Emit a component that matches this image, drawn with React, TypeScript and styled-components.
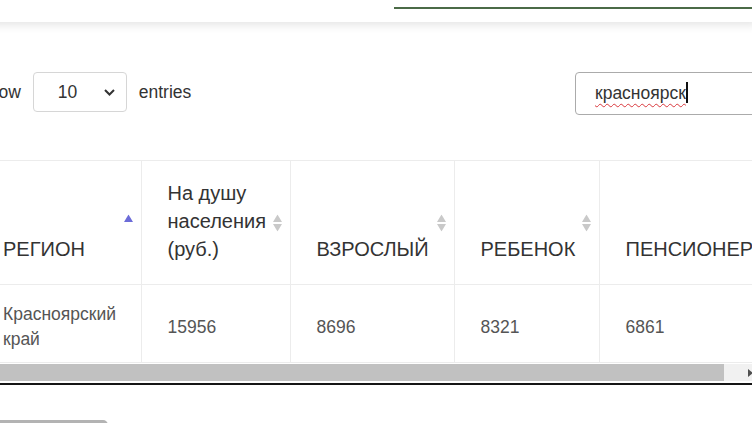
import React from "react";
import styled, { createGlobalStyle } from "styled-components";

const GlobalStyle = createGlobalStyle`
  html, body {
    margin: 0;
    padding: 0;
    background: #fff;
    overflow: hidden;
  }
  body {
    font-family: "Liberation Sans", Arial, sans-serif;
    color: #333;
  }
`;

const Viewport = styled.div`
  width: 752px;
  height: 423px;
  overflow: hidden;
`;

// the page is scrolled sideways, so its left edge sits just off-screen
const Page = styled.div`
  width: 782px;
  margin-left: -23px;
`;

const TopBar = styled.div`
  height: 22px;
  display: flex;
  box-sizing: border-box;
  padding: 7px 0 0 417px;
  background: #fff;
  box-shadow: 0 5px 10px -2px rgba(0, 0, 0, 0.11);
  position: relative;
  z-index: 1;
`;

const NavLine = styled.div`
  flex: 1;
  height: 2px;
  background: #4b6b47;
`;

const Controls = styled.div`
  margin-top: 50px;
  height: 43px;
  display: flex;
  align-items: center;
  font-size: 17.5px;
`;

const LengthControl = styled.div`
  display: flex;
  align-items: center;
  gap: 12px;
  margin-top: -3px;
`;

const SelectBox = styled.div`
  width: 94px;
  height: 40px;
  box-sizing: border-box;
  border: 1px solid #d6d6d6;
  border-radius: 4px;
  padding: 0 11px 0 24px;
  display: flex;
  align-items: center;
  justify-content: space-between;
  color: #333;
`;

const SearchBox = styled.div`
  margin-left: auto;
  width: 184px;
  height: 43px;
  box-sizing: border-box;
  border: 1px solid #ababab;
  border-radius: 4px;
  padding-left: 19px;
  display: flex;
  align-items: center;
  color: #333;
`;

const Misspelled = styled.span`
  text-decoration: underline wavy #d9383d;
  text-decoration-thickness: 1px;
  text-underline-offset: 4px;
`;

const Caret = styled.span`
  display: inline-block;
  width: 2px;
  height: 21px;
  background: #111;
  margin-top: -2px;
`;

const ScrollHead = styled.div`
  margin-top: 45px;
  width: 782px;
  overflow: hidden;
`;

const Table = styled.table`
  width: 822px;
  table-layout: fixed;
  border-collapse: collapse;
`;

const HeadCell = styled.th`
  position: relative;
  text-align: left;
  vertical-align: bottom;
  font-weight: normal;
  font-size: 20px;
  line-height: 28px;
  color: #333;
  padding: 18px 21px 21px 26px;
  border-top: 1px solid #ececec;
  border-bottom: 1px solid #ececec;
  border-right: 1px solid #ececec;
`;

const BodyCell = styled.td`
  vertical-align: middle;
  font-size: 17.5px;
  line-height: 25px;
  color: #555;
  padding: 17px 22px 10px 26px;
  border-bottom: 1px solid #ececec;
  border-right: 1px solid #ececec;
`;

const SortMark = styled.svg`
  position: absolute;
  right: 8px;
  top: 50%;
  transform: translateY(-50%);
`;

const ScrollBar = styled.div`
  margin-top: 1px;
  height: 17px;
  display: flex;
  background: #f1f1f1;
`;

const ScrollButton = styled.div`
  width: 17px;
  display: flex;
  align-items: center;
  justify-content: center;
`;

const ScrollThumb = styled.div<{ $width: number }>`
  width: ${(p) => p.$width}px;
  background: #c1c1c1;
`;

const ScrollTrack = styled.div`
  flex: 1;
`;

const BottomRule = styled.div`
  margin-top: 2px;
  height: 2px;
  background: #151515;
`;

const PagerButton = styled.div`
  margin-top: 35px;
  width: 131px;
  height: 30px;
  border-radius: 5px;
  background: #b3b3b3;
`;

type SortDir = "asc" | "both";

const SortIcon = ({ dir }: { dir: SortDir }) => (
  <SortMark width="9" height="17" viewBox="0 0 9 17">
    <polygon points="0,7.5 4.5,0 9,7.5" fill={dir === "asc" ? "#6c6cd8" : "#c9c9c9"} />
    {dir === "both" && <polygon points="0,9.5 9,9.5 4.5,17" fill="#c9c9c9" />}
  </SortMark>
);

const Chevron = () => (
  <svg width="11" height="7" viewBox="0 0 11 7">
    <path d="M1 1 L5.5 5.5 L10 1" fill="none" stroke="#333" strokeWidth="2" />
  </svg>
);

const columns = [
  { title: "РЕГИОН", width: 164, sort: "asc" as SortDir },
  { title: "На душу населения (руб.)", width: 149, sort: "both" as SortDir },
  { title: "ВЗРОСЛЫЙ", width: 164, sort: "both" as SortDir },
  { title: "РЕБЕНОК", width: 145, sort: "both" as SortDir },
  { title: "ПЕНСИОНЕР", width: 200, sort: "both" as SortDir },
];

const rows = [["Красноярский край", "15956", "8696", "8321", "6861"]];

export default function App() {
  return (
    <Viewport>
      <GlobalStyle />
      <Page>
        <TopBar>
          <NavLine />
        </TopBar>

        <Controls>
          <LengthControl>
            <span>Show</span>
            <SelectBox>
              <span>10</span>
              <Chevron />
            </SelectBox>
            <span>entries</span>
          </LengthControl>
          <SearchBox>
            <Misspelled>красноярск</Misspelled>
            <Caret />
          </SearchBox>
        </Controls>

        <ScrollHead>
          <Table>
            <colgroup>
              {columns.map((c) => (
                <col key={c.title} style={{ width: c.width }} />
              ))}
            </colgroup>
            <thead>
              <tr>
                {columns.map((c) => (
                  <HeadCell key={c.title}>
                    {c.title}
                    <SortIcon dir={c.sort} />
                  </HeadCell>
                ))}
              </tr>
            </thead>
            <tbody>
              {rows.map((r) => (
                <tr key={r[0]}>
                  {r.map((v, i) => (
                    <BodyCell key={i}>{v}</BodyCell>
                  ))}
                </tr>
              ))}
            </tbody>
          </Table>
          <ScrollBar>
            <ScrollButton />
            <ScrollThumb $width={730} />
            <ScrollTrack />
            <ScrollButton>
              <svg width="5" height="8" viewBox="0 0 5 8">
                <polygon points="0,0 5,4 0,8" fill="#505050" />
              </svg>
            </ScrollButton>
          </ScrollBar>
          <BottomRule />
        </ScrollHead>

        <PagerButton />
      </Page>
    </Viewport>
  );
}
